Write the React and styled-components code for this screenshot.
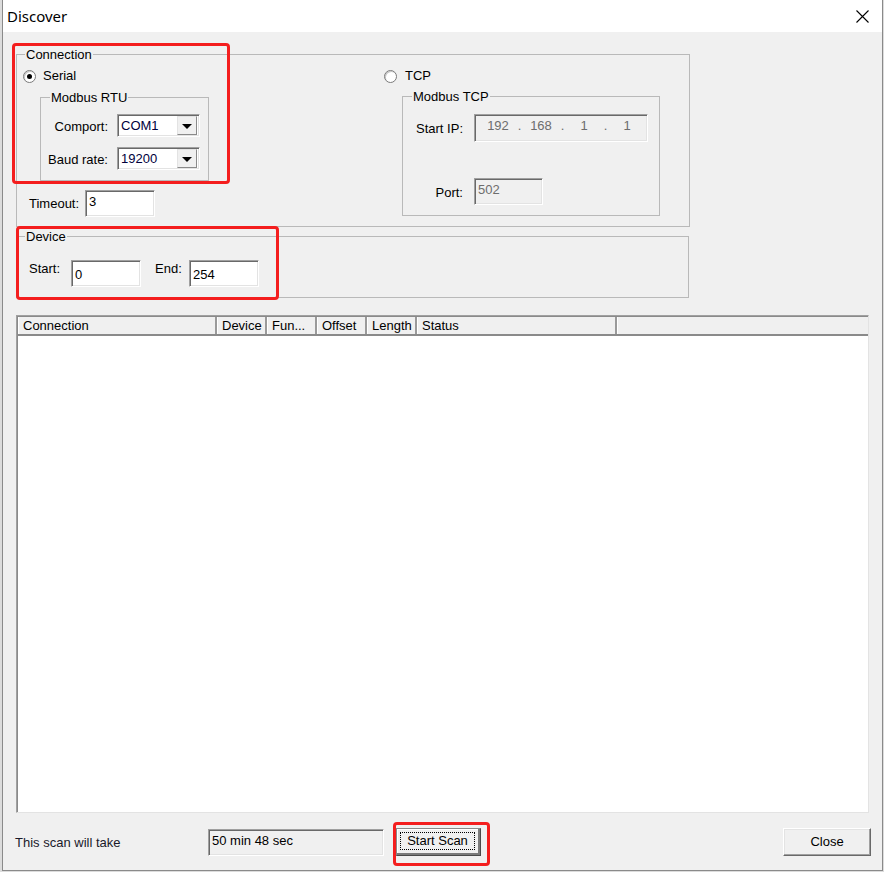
import styled, { createGlobalStyle } from "styled-components";

const GlobalStyle = createGlobalStyle`
  html, body {
    margin: 0;
    padding: 0;
    background: #dcdcdc;
  }
  body {
    font-family: "Liberation Sans", Arial, sans-serif;
    font-size: 13px;
    color: #000;
  }
  #root {
    width: 884px;
    height: 872px;
    overflow: hidden;
  }
`;

const sunken = `
  border: 1px solid;
  border-color: #a0a0a0 #ffffff #ffffff #a0a0a0;
  box-shadow: inset 1px 1px 0 #696969, inset -1px -1px 0 #e3e3e3;
`;

const raised = `
  border: 1px solid;
  border-color: #ffffff #696969 #696969 #ffffff;
  box-shadow: inset -1px -1px 0 #a0a0a0, inset 1px 1px 0 #e3e3e3;
`;

const columns = [
  { title: "Connection", width: 199 },
  { title: "Device", width: 50 },
  { title: "Fun...", width: 50 },
  { title: "Offset", width: 50 },
  { title: "Length", width: 50 },
  { title: "Status", width: 200 },
];

function App() {
  return (
    <>
      <GlobalStyle />
      <Window>
        <TitleBar>
          <Title>Discover</Title>
          <CloseX>
            <svg width="13" height="13" viewBox="0 0 13 13">
              <path d="M0.5 0.5 L12.5 12.5 M12.5 0.5 L0.5 12.5" stroke="#000" strokeWidth="1.1" />
            </svg>
          </CloseX>
        </TitleBar>

        <Content>
          <GroupBox $left={13} $width={674} $pad="6px 0 9px 0">
            <Legend $indent={9}>Connection</Legend>
            <Columns>
              <LeftCol>
                <RadioRow>
                  <Radio $checked>
                    <Dot />
                  </Radio>
                  <span>Serial</span>
                </RadioRow>
                <GroupBox $left={17} $top={6} $width={169} $pad="9px 0 10px 0">
                  <Legend $indent={10}>Modbus RTU</Legend>
                  <FormRows $gap={10}>
                    <FormRow>
                      <FieldLabel $width={67}>Comport:</FieldLabel>
                      <Combo>
                        <ComboText>COM1</ComboText>
                        <ComboButton>
                          <Arrow />
                        </ComboButton>
                      </Combo>
                    </FormRow>
                    <FormRow>
                      <FieldLabel $width={67}>Baud rate:</FieldLabel>
                      <Combo>
                        <ComboText>19200</ComboText>
                        <ComboButton>
                          <Arrow />
                        </ComboButton>
                      </Combo>
                    </FormRow>
                  </FormRows>
                </GroupBox>
                <TimeoutRow>
                  <InlineLabel $width={56} $top={1}>Timeout:</InlineLabel>
                  <EditBox $width={70} $height={27} $align="flex-start">3</EditBox>
                </TimeoutRow>
              </LeftCol>

              <RightCol>
                <RadioRow $gap={8}>
                  <Radio />
                  <span>TCP</span>
                </RadioRow>
                <GroupBox $left={18} $top={5} $width={258} $pad="10px 0 10px 0">
                  <Legend $indent={10}>Modbus TCP</Legend>
                  <FormRows $gap={36}>
                    <FormRow>
                      <FieldLabel $width={60} $gap={11}>Start IP:</FieldLabel>
                      <EditBox $width={174} $height={28} $disabled $align="flex-start">
                        <IpField>
                          <Octet>192</Octet>
                          <IpDot>.</IpDot>
                          <Octet>168</Octet>
                          <IpDot>.</IpDot>
                          <Octet>1</Octet>
                          <IpDot>.</IpDot>
                          <Octet>1</Octet>
                        </IpField>
                      </EditBox>
                    </FormRow>
                    <FormRow>
                      <FieldLabel $width={60} $gap={11}>Port:</FieldLabel>
                      <EditBox $width={69} $height={27} $disabled $align="flex-start">
                        502
                      </EditBox>
                    </FormRow>
                  </FormRows>
                </GroupBox>
              </RightCol>
            </Columns>
          </GroupBox>

          <GroupBox $left={13} $top={2} $width={673} $pad="16px 0 10px 0">
            <Legend $indent={9}>Device</Legend>
            <DeviceRow>
              <InlineLabel $width={42} $top={1}>Start:</InlineLabel>
              <EditBox $width={70} $height={27}>0</EditBox>
              <InlineLabel $width={34} $top={1} $left={14}>End:</InlineLabel>
              <EditBox $width={70} $height={27}>254</EditBox>
            </DeviceRow>
          </GroupBox>

          <ListView>
            <HeaderRow>
              {columns.map((c) => (
                <HeaderCell key={c.title} $width={c.width}>
                  {c.title}
                </HeaderCell>
              ))}
              <HeaderCell $width={251} $last />
            </HeaderRow>
            <ListBody />
          </ListView>

          <BottomBar>
            <ScanLabel>This scan will take</ScanLabel>
            <EditBox $width={176} $height={27} $disabled $dark $align="flex-start">
              50 min 48 sec
            </EditBox>
            <DefaultButton>
              <FocusRect>Start Scan</FocusRect>
            </DefaultButton>
            <Button>Close</Button>
          </BottomBar>
        </Content>

        <Highlight $x={9} $y={43} $w={218} $h={141} />
        <Highlight $x={13} $y={226} $w={263} $h={74} />
        <Highlight $x={390} $y={822} $w={97} $h={44} />
      </Window>
    </>
  );
}

export default App;

const Window = styled.div`
  position: relative;
  margin-left: 2px;
  width: 881px;
  height: 871px;
  box-sizing: border-box;
  border: 1px solid #8a8a8a;
  border-top: none;
  background: #f0f0f0;
  display: flex;
  flex-direction: column;
`;

const TitleBar = styled.div`
  height: 32px;
  flex-shrink: 0;
  background: #ffffff;
  display: flex;
  align-items: center;
  justify-content: space-between;
  padding-left: 4px;
`;

const Title = styled.div`
  font-family: "Noto Sans", "Liberation Sans", sans-serif;
  font-size: 15px;
  color: #000;
  margin-top: -1px;
`;

const CloseX = styled.div`
  width: 40px;
  height: 32px;
  display: flex;
  align-items: center;
  justify-content: center;
`;

const Content = styled.div`
  display: flex;
  flex-direction: column;
  padding-top: 15px;
`;

const GroupBox = styled.fieldset`
  margin: ${(p) => p.$top || 0}px 0 0 ${(p) => p.$left || 0}px;
  padding: ${(p) => p.$pad};
  width: ${(p) => p.$width}px;
  box-sizing: border-box;
  min-width: 0;
  border: 1px solid #b9b9b9;
`;

const Legend = styled.legend`
  margin-left: ${(p) => p.$indent - 1}px;
  padding: 0 1px;
  font-size: 13px;
  line-height: 15px;
  color: #000;
`;

const Columns = styled.div`
  display: flex;
  padding-left: 6px;
`;

const LeftCol = styled.div`
  width: 361px;
  display: flex;
  flex-direction: column;
`;

const RightCol = styled.div`
  display: flex;
  flex-direction: column;
`;

const RadioRow = styled.div`
  height: 16px;
  display: flex;
  align-items: center;
  gap: ${(p) => p.$gap || 7}px;
  line-height: 16px;
`;

const Radio = styled.span`
  width: 13px;
  height: 13px;
  box-sizing: border-box;
  border-radius: 50%;
  border: 1px solid #7a7a7a;
  background: #ffffff;
  box-shadow: inset 1px 1px 0 #c8c8c8;
  display: flex;
  align-items: center;
  justify-content: center;
`;

const Dot = styled.span`
  width: 5px;
  height: 5px;
  border-radius: 50%;
  background: #000;
`;

const FormRows = styled.div`
  display: flex;
  flex-direction: column;
  gap: ${(p) => p.$gap}px;
`;

const FormRow = styled.div`
  display: flex;
  align-items: center;
`;

const FieldLabel = styled.span`
  width: ${(p) => p.$width}px;
  margin-right: ${(p) => p.$gap || 9}px;
  text-align: right;
  line-height: 16px;
  padding-top: 2px;
  white-space: nowrap;
`;

const InlineLabel = styled.span`
  width: ${(p) => p.$width}px;
  margin-left: ${(p) => p.$left || 0}px;
  margin-top: ${(p) => p.$top || 0}px;
  line-height: 16px;
  white-space: nowrap;
`;

const Combo = styled.div`
  width: 83px;
  height: 23px;
  box-sizing: border-box;
  ${sunken}
  background: #ffffff;
  display: flex;
  align-items: center;
  padding: 1px 2px 1px 1px;
`;

const ComboText = styled.span`
  flex: 1;
  padding-left: 2px;
  line-height: 16px;
  color: #00003c;
`;

const ComboButton = styled.span`
  width: 20px;
  height: 19px;
  box-sizing: border-box;
  background: #f0f0f0;
  border: 1px solid;
  border-color: #e3e3e3 #8a8a8a #8a8a8a #e3e3e3;
  display: flex;
  align-items: center;
  justify-content: center;
`;

const Arrow = styled.span`
  width: 0;
  height: 0;
  border-left: 5px solid transparent;
  border-right: 5px solid transparent;
  border-top: 5px solid #000;
  margin-top: 1px;
`;

const TimeoutRow = styled.div`
  display: flex;
  align-items: center;
  margin: 9px 0 0 6px;
`;

const EditBox = styled.div`
  width: ${(p) => p.$width}px;
  height: ${(p) => p.$height}px;
  flex-shrink: 0;
  box-sizing: border-box;
  ${sunken}
  background: ${(p) => (p.$disabled ? "#f0f0f0" : "#ffffff")};
  color: ${(p) => (p.$disabled && !p.$dark ? "#6d6d6d" : "#000")};
  display: flex;
  align-items: ${(p) => p.$align || "center"};
  padding: ${(p) => (p.$align === "flex-start" ? "3px 0 0 3px" : "2px 0 0 3px")};
  line-height: 16px;
`;

const IpField = styled.div`
  display: flex;
  padding-left: 2px;
`;

const Octet = styled.span`
  width: 36px;
  text-align: center;
`;

const IpDot = styled.span`
  width: 7px;
  text-align: center;
`;

const DeviceRow = styled.div`
  display: flex;
  align-items: flex-start;
  padding-left: 12px;
`;

const ListView = styled.div`
  margin: 17px 0 0 13px;
  width: 853px;
  height: 498px;
  box-sizing: border-box;
  border: 1px solid;
  border-color: #a0a0a0 #e3e3e3 #e3e3e3 #a0a0a0;
  padding: 1px 0 0 1px;
  box-shadow: inset 1px 1px 0 #8a8a8a;
  background: #ffffff;
  display: flex;
  flex-direction: column;
`;

const HeaderRow = styled.div`
  height: 19px;
  box-sizing: border-box;
  display: flex;
  background: #f0f0f0;
  border-bottom: 2px solid #8a8a8a;
  overflow: hidden;
`;

const HeaderCell = styled.div`
  width: ${(p) => p.$width}px;
  flex-shrink: 0;
  box-sizing: border-box;
  border-right: ${(p) => (p.$last ? "none" : "2px solid #9a9a9a")};
  box-shadow: inset 1px 0 0 #ffffff;
  padding-left: 5px;
  line-height: 18px;
  white-space: nowrap;
`;

const ListBody = styled.div`
  flex: 1;
  background: #ffffff;
`;

const BottomBar = styled.div`
  display: flex;
  align-items: center;
  margin-top: 15px;
  padding: 0 11px 0 12px;
`;

const ScanLabel = styled.span`
  width: 193px;
  line-height: 16px;
  padding-top: 2px;
  color: #1a1a2a;
`;

const DefaultButton = styled.div`
  margin-left: 12px;
  width: 85px;
  height: 28px;
  box-sizing: border-box;
  border: 1px solid;
  border-color: #8a8a8a #4a4a4a #4a4a4a #8a8a8a;
  box-shadow: inset -2px -2px 0 #7a7a7a, inset 1px 1px 0 #ffffff;
  background: #f0f0f0;
  padding: 3px 5px 5px 3px;
  display: flex;
`;

const FocusRect = styled.span`
  flex: 1;
  border: 1px dotted #000;
  display: flex;
  align-items: center;
  justify-content: center;
  line-height: 16px;
`;

const Button = styled.div`
  margin-left: auto;
  width: 88px;
  height: 28px;
  box-sizing: border-box;
  ${raised}
  background: #f0f0f0;
  display: flex;
  align-items: center;
  justify-content: center;
  line-height: 16px;
`;

const Highlight = styled.div`
  position: absolute;
  left: ${(p) => p.$x}px;
  top: ${(p) => p.$y}px;
  width: ${(p) => p.$w}px;
  height: ${(p) => p.$h}px;
  box-sizing: border-box;
  border: 3px solid #f41e1e;
  border-radius: 4px;
  pointer-events: none;
`;
